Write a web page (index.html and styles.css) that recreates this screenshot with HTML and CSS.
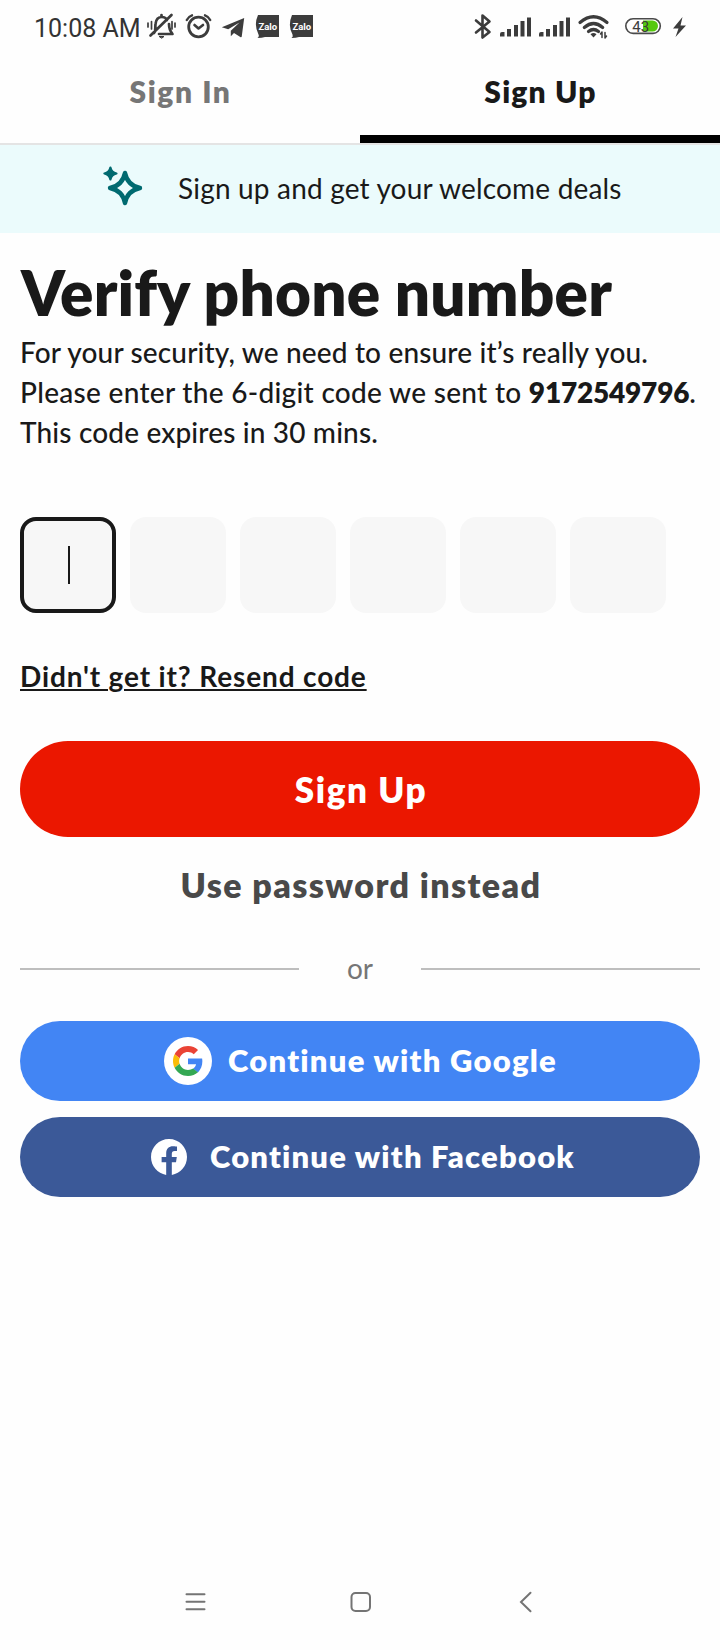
FILE: index.html
```html
<!DOCTYPE html>
<html lang="en">
<head>
<meta charset="utf-8">
<title>Sign Up</title>
<link rel="stylesheet" href="styles.css">
</head>
<body>
<div class="screen">
  <div class="status">
    <span class="clock">10:08 AM</span>
    <svg width="38" height="52" viewBox="144 0 38 52" class="line">
      <path d="M154 33C156 31 155 28 155.500 24C156 19 159 17 162 17C164 17 166 18 167 20M169 24C169 29 170 31 172.500 34H159M161.500 16.500V15M150.500 35.500L171.500 15" stroke-width="2.700"/>
      <path d="M159.500 36.500H164L162 38Z" fill="#3c3c3c"/>
      <path d="M148 23V27M151.500 21.500V29M172 21.500V29M175 23V27" stroke-width="1.700"/>
    </svg>
    <svg width="34" height="52" viewBox="182 0 34 52" class="line">
      <circle cx="198.500" cy="27" r="9.800" stroke-width="2.800"/>
      <path d="M194.500 25L198.500 28.500L203 25" stroke-width="2.600"/>
      <path d="M186.800 20Q188.500 16.500 192 15.300M210.200 20Q208.500 16.500 205 15.300" stroke-width="2.400"/>
    </svg>
    <svg width="36" height="52" viewBox="216 0 36 52"><path class="ink" d="M221.800 27.200L244.200 18L241.700 36.800Q241.300 37.600 240.300 37L234 33L230.800 36.300V30.800L239.500 22.500L228.200 29.300Z"/></svg>
    <svg width="34" height="52" viewBox="252 0 34 52"><path class="ink" d="M258 15H279V37H265Q262 38 257.500 38Q259.500 36.500 258.500 34.500Q253.500 25 258 15Z"/><text class="zalo" x="267.800" y="29.500">Zalo</text></svg>
    <svg width="34" height="52" viewBox="252 0 34 52"><path class="ink" d="M258 15H279V37H265Q262 38 257.500 38Q259.500 36.500 258.500 34.500Q253.500 25 258 15Z"/><text class="zalo" x="267.800" y="29.500">Zalo</text></svg>
    <svg width="26" height="52" viewBox="470 0 26 52" class="line right"><path d="M476 20.500L489.500 32L482.500 37.500V15.500L489.500 21.500L476 32.500" stroke-width="2.600"/></svg>
    <svg width="39" height="52" viewBox="496 0 39 52"><path class="ink" d="M500 36.500V34Q500 32 502 32H504.500V36.500ZM507 29H511V36.500H507ZM514 25H518V36.500H514ZM520.500 21H524.500V36.500H520.500ZM527 17.500H531V36.500H527Z"/></svg>
    <svg width="39" height="52" viewBox="496 0 39 52"><path class="ink" d="M500 36.500V34Q500 32 502 32H504.500V36.500ZM507 29H511V36.500H507ZM514 25H518V36.500H514ZM520.500 21H524.500V36.500H520.500ZM527 17.500H531V36.500H527Z"/></svg>
    <svg width="42" height="52" viewBox="574 0 42 52" class="line">
      <path d="M580 22.500Q593.500 11 607 22.500M584.300 27.500Q593.500 19.500 602.700 27.500M588.500 31.500Q593.500 27.500 598.500 31.500" stroke-width="3.200"/>
      <path class="ink" stroke="none" d="M590.500 34.300Q593.500 31.800 596.500 34.300L593.500 37.500Z"/>
      <path d="M602 37.500V32L600.500 34M605 32.500V38L606.500 36" stroke-width="1.500"/>
    </svg>
    <svg width="50" height="52" viewBox="616 0 50 52">
      <path d="M643 20.500H652.500A5.500 5.500 0 0 1 652.500 31.500H643Z" fill="#55c80e"/>
      <rect x="625.800" y="18.800" width="34.500" height="14.600" rx="7.300" fill="none" stroke="#4a4a4a" stroke-width="1.600"/>
      <text class="charge" x="640.700" y="31.800">43</text>
    </svg>
    <svg width="30" height="52" viewBox="666 0 30 52"><path class="ink" d="M682.500 17L673 28.500H678.500L675.500 37L686 25.500H680.500Z"/></svg>
  </div>

  <div class="tabs">
    <div class="tab signin">Sign In</div>
    <div class="tab active">Sign Up</div>
  </div>

  <div class="banner">
    <svg width="42" height="42" viewBox="102 165 42 42">
      <path d="M110.400 167.500Q111.500 172.400 116.500 173.500Q111.500 174.600 110.400 179.500Q109.300 174.600 104.400 173.500Q109.300 172.400 110.400 167.500Z" fill="#006a70" stroke="#006a70" stroke-width="2.200" stroke-linejoin="round"/>
      <path d="M125 173Q127.500 185.500 140 188Q127.500 190.500 125 203Q122.500 190.500 110 188Q122.500 185.500 125 173Z" fill="none" stroke="#006a70" stroke-width="4.400" stroke-linejoin="round"/>
    </svg>
    <span>Sign up and get your welcome deals</span>
  </div>

  <main class="content">
    <h1>Verify phone number</h1>
    <p class="copy"><span>For your security, we need to ensure it’s really you.</span><br><span class="sent">Please enter the 6-digit code we sent to </span><b>9172549796</b>.<br><span>This code expires in 30 mins.</span></p>

    <div class="code">
      <span class="cell focus"><i class="caret"></i></span>
      <span class="cell"></span>
      <span class="cell"></span>
      <span class="cell"></span>
      <span class="cell"></span>
      <span class="cell"></span>
    </div>

    <a class="resend">Didn't get it? Resend code</a>

    <div class="btn primary">Sign Up</div>
    <div class="alt">Use password instead</div>

    <div class="divider"><span class="rule"></span><span class="or">or</span><span class="rule"></span></div>

    <div class="btn google">
      <span class="disc"><svg width="30" height="30" viewBox="0 0 48 48">
        <path fill="#EA4335" d="M24 9.500c3.540 0 6.710 1.220 9.210 3.600l6.850-6.850C35.900 2.380 30.470 0 24 0 14.620 0 6.510 5.380 2.560 13.220l7.980 6.190C12.430 13.720 17.740 9.500 24 9.500z"/>
        <path fill="#4285F4" d="M46.980 24.550c0-1.570-.15-3.090-.38-4.550H24v9.020h12.940c-.58 2.960-2.260 5.480-4.780 7.180l7.730 6c4.510-4.180 7.090-10.360 7.090-17.650z"/>
        <path fill="#FBBC05" d="M10.530 28.590c-.48-1.450-.76-2.990-.76-4.590s.27-3.140.76-4.590l-7.980-6.190C.92 16.460 0 20.120 0 24s.92 7.540 2.560 10.780l7.970-6.190z"/>
        <path fill="#34A853" d="M24 48c6.480 0 11.930-2.130 15.890-5.810l-7.730-6c-2.150 1.450-4.920 2.300-8.160 2.300-6.260 0-11.570-4.220-13.470-9.910l-7.980 6.190C6.510 42.620 14.620 48 24 48z"/>
      </svg></span>
      <span class="label">Continue with Google</span>
    </div>
    <div class="btn facebook">
      <svg width="36" height="36" viewBox="0 0 24 24"><path fill="#fff" d="M24 12.073c0-6.627-5.373-12-12-12s-12 5.373-12 12c0 5.990 4.388 10.954 10.125 11.854v-8.385H7.078v-3.470h3.047V9.430c0-3.007 1.792-4.669 4.533-4.669 1.312 0 2.686.235 2.686.235v2.953H15.830c-1.491 0-1.956.925-1.956 1.874v2.250h3.328l-.532 3.470h-2.796v8.385C19.612 23.027 24 18.062 24 12.073z"/></svg>
      <span class="label">Continue with Facebook</span>
    </div>
  </main>

  <div class="nav">
    <svg width="24" height="24" viewBox="0 0 24 24"><path d="M3.500 4.200H21.500M3.500 11.700H21.500M3.500 19.200H21.500"/></svg>
    <svg width="24" height="24" viewBox="0 0 24 24"><rect x="2.500" y="3" width="18.500" height="18" rx="4"/></svg>
    <svg width="24" height="24" viewBox="0 0 24 24"><path d="M16.500 2.800L7 12L16.500 21.200"/></svg>
  </div>
</div>
</body>
</html>
```

FILE: styles.css
```css
* { box-sizing: border-box; }
body { margin: 0; background: #fff; }
.screen { width: 720px; height: 1650px; display: flex; flex-direction: column; background: #fefefe; color: #191919; font-family: Lato, "Liberation Sans", sans-serif; font-variant-ligatures: none; }
svg { flex: none; display: block; }

/* Device status bar */
.status { height: 52px; display: flex; padding-left: 34px; padding-right: 24px; flex: none; }
.clock { width: 110px; flex: none; font: 400 25px/57px Roboto, sans-serif; letter-spacing: 0; color: #333; white-space: nowrap; }
.line { fill: none; stroke: #3c3c3c; stroke-linecap: round; stroke-linejoin: round; }
.ink { fill: #3c3c3c; }
.right { margin-left: auto; }
.zalo { font: 700 9.5px Roboto, sans-serif; fill: #fff; text-anchor: middle; }
.charge { font: 400 15px Roboto, sans-serif; fill: #3c3c3c; text-anchor: middle; }

/* Tabs */
.tabs { height: 93px; flex: none; display: flex; border-bottom: 2px solid #e4e4e4; }
.tab { width: 360px; text-align: center; font-weight: 800; font-size: 30px; line-height: 78px; letter-spacing: 1.2px; padding-left: 1px; color: #767676; border-bottom: 8px solid transparent; }
.signin { letter-spacing: 1.6px; }
.tab.active { color: #191919; border-bottom-color: #000; }

.banner { height: 88px; flex: none; background: #ebfbfc; display: flex; align-items: center; padding: 0 0 3px 102px; gap: 34px; font-size: 28px; font-weight: 400; letter-spacing: 0.18px; white-space: nowrap; }
.banner svg { margin-bottom: 3px; }

/* Form */
.content { padding: 27px 20px 0; display: flex; flex-direction: column; }
h1 { margin: 0; padding-left: 1px; font-size: 62px; line-height: 64px; font-weight: 800; letter-spacing: 0.18px; white-space: nowrap; }
.copy { margin: 8px 0 0; font-size: 28px; line-height: 40px; font-weight: 500; letter-spacing: 0.16px; white-space: nowrap; }
.sent { letter-spacing: 0.3px; }
.copy b { font-weight: 800; letter-spacing: -0.2px; }
.code { display: flex; gap: 14px; margin-top: 65px; }
.cell { width: 96px; height: 96px; border-radius: 16px; background: #f7f7f7; display: flex; align-items: center; justify-content: center; }
.focus { border: 4px solid #191919; }
.caret { width: 2px; height: 38px; margin-left: 2px; background: #191919; }
.resend { margin-top: 43px; align-self: flex-start; height: 40px; line-height: 40px; font-size: 28px; font-weight: 700; letter-spacing: 0.86px; text-decoration: underline; text-decoration-thickness: 2px; text-underline-offset: 2px; white-space: nowrap; }
.btn { display: flex; align-items: center; color: #fff; font-weight: 800; border-radius: 48px; white-space: nowrap; }
.primary { height: 96px; margin-top: 45px; padding-left: 2px; padding-bottom: 1px; background: #eb1700; justify-content: center; font-size: 35px; letter-spacing: 1.6px; }
.alt { margin-top: 22px; padding-left: 2px; height: 52px; line-height: 52px; text-align: center; font-size: 34px; font-weight: 800; letter-spacing: 1.4px; color: #494949; }
.divider { margin-top: 38px; height: 40px; display: flex; align-items: center; justify-content: space-between; font-size: 28px; color: #767676; }
.or { padding-bottom: 3px; }
.rule { width: 279px; height: 2px; background: #bebebe; }
.label { padding-bottom: 2px; }
.google { height: 80px; margin-top: 32px; padding-left: 144px; gap: 16px; background: #4285f4; font-size: 31px; letter-spacing: 1.25px; }
.disc { width: 48px; height: 48px; border-radius: 50%; background: #fff; display: flex; align-items: center; justify-content: center; }
.facebook { height: 80px; margin-top: 16px; padding-left: 131px; gap: 23px; background: #3b5998; font-size: 31px; letter-spacing: 1.18px; }

/* System navigation */
.nav { margin-top: auto; height: 96px; display: flex; justify-content: space-between; align-items: center; padding: 0 182px 0 183px; }
.nav svg { fill: none; stroke: #747474; stroke-width: 2; stroke-linecap: round; }
```
